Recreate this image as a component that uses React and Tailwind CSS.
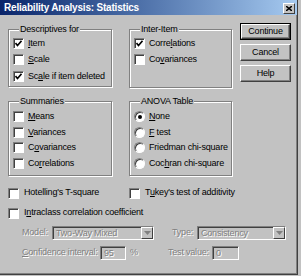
import React from "react";

const dis = "text-[#808080] [text-shadow:1px_1px_0_#ffffff]";

const Check = ({ checked }) => (
  <span className="w-[11px] h-[11px] shrink-0 bg-white border border-[#808080] border-r-white border-b-white shadow-[inset_1px_1px_0_#404040] flex items-center justify-center">
    {checked && (
      <svg width="7" height="7" viewBox="0 0 7 7">
        <polyline points="0.5,3 2.5,5.5 6.5,0.8" fill="none" stroke="#000" strokeWidth="1.6" />
      </svg>
    )}
  </span>
);

const Radio = ({ on }) => (
  <span className="w-[11px] h-[11px] shrink-0 rounded-full bg-white border border-[#808080] border-r-white border-b-white shadow-[inset_1px_1px_0_#404040] flex items-center justify-center">
    {on && <span className="w-[4px] h-[4px] rounded-full bg-black" />}
  </span>
);

const Row = ({ children, label, h = "h-[16.5px]" }) => (
  <div className={`flex items-center gap-[4px] ${h}`}>
    {children}
    <span className="whitespace-nowrap">{label}</span>
  </div>
);

const Group = ({ title, w, h, children, className = "" }) => (
  <fieldset
    className={`${w} ${h} min-w-0 border border-[#808080] shadow-[inset_1px_1px_0_#ffffff,1px_1px_0_#ffffff] pl-[4px] ${className}`}
  >
    <legend className="ml-[6px] px-[1px] leading-[12px] bg-[#c2c2c2]">{title}</legend>
    {children}
  </fieldset>
);

const Button = ({ children, def }) => (
  <div className={def ? "border border-black" : ""}>
    <div
      className={`flex items-center justify-center ${def ? "h-[15px]" : "h-[17px]"} border border-white border-r-[#404040] border-b-[#404040] shadow-[inset_-1px_-1px_0_#808080]`}
    >
      {children}
    </div>
  </div>
);

const Combo = ({ value, w }) => (
  <div className={`${w} h-[14px] flex border border-[#808080] border-r-white border-b-white shadow-[inset_1px_1px_0_#404040] bg-[#c2c2c2]`}>
    <span className={`flex-1 pl-[3px] pt-[1px] leading-[11px] whitespace-nowrap overflow-hidden ${dis}`}>{value}</span>
    <span className="w-[12px] h-[12px] border border-white border-r-[#404040] border-b-[#404040] flex items-center justify-center">
      <svg width="7" height="4" viewBox="0 0 7 4">
        <polygon points="0,0 7,0 3.5,4" fill="#808080" />
      </svg>
    </span>
  </div>
);

const Field = ({ value, w }) => (
  <div className={`${w} h-[14px] border border-[#808080] border-r-white border-b-white shadow-[inset_1px_1px_0_#404040] bg-[#c2c2c2] pl-[3px] leading-[12px] ${dis}`}>
    {value}
  </div>
);

export default function App() {
  return (
    <div className="w-[301px] h-[276px] bg-[#c2c2c2] text-[9px] tracking-[-0.2px] text-black font-['Liberation_Sans',Arial,sans-serif]">
      <div className="w-[298px] h-[275px] flex flex-col border-r border-b border-[#404040] shadow-[inset_-1px_-1px_0_#808080]">
        {/* Title bar */}
        <div className="h-[15px] shrink-0 flex items-center justify-between pl-[4px] pr-[2px] bg-gradient-to-r from-[#0a246a] to-[#a6caf0]">
          <span className="text-white font-bold text-[10px] tracking-[-0.2px] leading-[13px] whitespace-nowrap">
            Reliability Analysis: Statistics
          </span>
          <span className="w-[12px] h-[11px] mt-[1px] bg-[#c2c2c2] border border-white border-r-[#404040] border-b-[#404040] flex items-center justify-center">
            <svg width="6" height="5" viewBox="0 0 6 5">
              <path d="M0 0 L6 5 M6 0 L0 5" stroke="#000" strokeWidth="1.5" />
            </svg>
          </span>
        </div>

        {/* Body */}
        <div className="pl-[8px] pt-[8px] flex flex-col">
          <div className="flex">
            <div className="flex flex-col gap-[7px]">
              <div className="flex gap-[17px]">
                <Group title="Descriptives for" w="w-[104px]" h="h-[64px]">
                  <Row label={<><u>I</u>tem</>}><Check checked /></Row>
                  <Row label={<><u>S</u>cale</>}><Check /></Row>
                  <Row label={<>Sc<u>a</u>le if item deleted</>}><Check checked /></Row>
                </Group>
                <Group title="Inter-Item" w="w-[103px]" h="h-[65px]">
                  <Row label={<>Corre<u>l</u>ations</>}><Check checked /></Row>
                  <Row label={<>Co<u>v</u>ariances</>}><Check /></Row>
                </Group>
              </div>
              <div className="flex gap-[17px]">
                <Group title="Summaries" w="w-[104px]" h="h-[81px]" className="pt-[2px]">
                  <Row h="h-[15.5px]" label={<><u>M</u>eans</>}><Check /></Row>
                  <Row h="h-[15.5px]" label={<><u>V</u>ariances</>}><Check /></Row>
                  <Row h="h-[15.5px]" label={<>C<u>o</u>variances</>}><Check /></Row>
                  <Row h="h-[15.5px]" label={<>Co<u>r</u>relations</>}><Check /></Row>
                </Group>
                <Group title="ANOVA Table" w="w-[103px]" h="h-[81px]" className="pt-[2px]">
                  <Row h="h-[15.5px]" label={<><u>N</u>one</>}><Radio on /></Row>
                  <Row h="h-[15.5px]" label={<><u>F</u> test</>}><Radio /></Row>
                  <Row h="h-[15.5px]" label="Friedman chi-square"><Radio /></Row>
                  <Row h="h-[15.5px]" label={<>Coc<u>h</u>ran chi-square</>}><Radio /></Row>
                </Group>
              </div>
            </div>
            <div className="ml-[8px] w-[51px] flex flex-col gap-[4px]">
              <Button def>Continue</Button>
              <Button>Cancel</Button>
              <Button>Help</Button>
            </div>
          </div>

          <div className="mt-[7px] flex flex-col">
            <div className="h-[20px] flex items-center">
              <div className="w-[121px] flex items-center gap-[5px]">
                <Check />
                <span>Hotelling's T-square</span>
              </div>
              <div className="flex items-center gap-[5px]">
                <Check />
                <span>T<u>u</u>key's test of additivity</span>
              </div>
            </div>
            <div className="h-[20px] flex items-center gap-[5px]">
              <Check />
              <span>I<u>n</u>traclass correlation coefficient</span>
            </div>
            <div className="h-[20px] flex items-center pl-[14px]">
              <span className={`w-[30px] ${dis}`}>Model:</span>
              <Combo value="Two-Way Mixed" w="w-[102px]" />
              <span className={`ml-[18px] w-[25px] ${dis}`}>Type:</span>
              <Combo value="Consistency" w="w-[89px]" />
            </div>
            <div className="h-[20px] flex items-center pl-[14px]">
              <span className={`w-[78px] whitespace-nowrap ${dis}`}><u>C</u>onfidence interval:</span>
              <Field value="95" w="w-[26px]" />
              <span className={`ml-[4px] w-[38px] ${dis}`}>%</span>
              <span className={`w-[44px] whitespace-nowrap ${dis}`}>Test value:</span>
              <Field value="0" w="w-[27px]" />
            </div>
          </div>
        </div>
      </div>
    </div>
  );
}
